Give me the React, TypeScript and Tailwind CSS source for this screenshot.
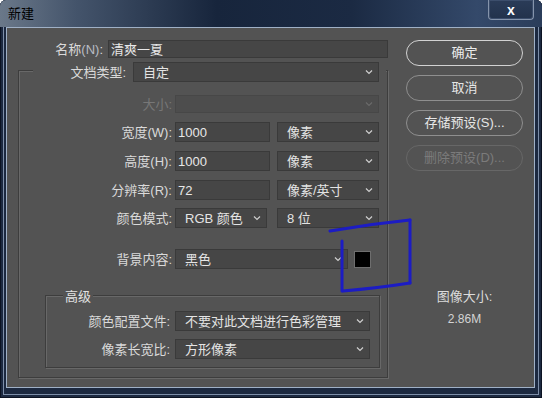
import type { ReactNode } from 'react'

const FONT = "font-['Liberation_Sans','Noto_Sans_CJK_SC',sans-serif]"

function Chevron({ dim = false }: { dim?: boolean }) {
  return (
    <svg width="8" height="6" viewBox="0 0 8 6" className="shrink-0">
      <polyline points="1,1.5 4,4.5 7,1.5" fill="none" stroke={dim ? '#6a6a6a' : '#cfcfcf'} strokeWidth={1.2} />
    </svg>
  )
}

function Select({ w, value, dim = false, h = 'h-[20px]' }: { w: string; value?: string; dim?: boolean; h?: string }) {
  return (
    <div
      className={`${w} ${h} flex items-center justify-between pl-[9px] pr-[5px] border ${dim ? 'bg-[#4d4d4d] border-[#474747]' : 'bg-[#464646] border-[#3a3a3a]'} text-[13px] text-[#e4e4e4]`}
    >
      <span className="leading-none">{value}</span>
      <Chevron dim={dim} />
    </div>
  )
}

function Input({ w, value }: { w: string; value: string }) {
  return (
    <div className={`${w} h-full flex items-center pl-[2px] bg-[#464646] border border-[#3a3a3a] text-[13px] text-[#e8e8e8]`}>
      <span className="leading-none">{value}</span>
    </div>
  )
}

function Row({ label, children, mt, dim = false, h = 'h-[20px]' }: { label: string; children: ReactNode; mt: string; dim?: boolean; h?: string }) {
  return (
    <div className={`flex items-center ${h} ${mt}`}>
      <div className={`w-[153px] text-right text-[13px] leading-none ${dim ? 'text-[#777]' : 'text-[#dadada]'}`}>{label}</div>
      <div className="ml-[3px] flex items-center h-full">{children}</div>
    </div>
  )
}

function Button({ children, tone }: { children: ReactNode; tone: 'main' | 'normal' | 'off' }) {
  const cls =
    tone === 'main'
      ? 'border-[#d2d2d2] text-[#ececec]'
      : tone === 'normal'
      ? 'border-[#8f8f8f] text-[#e6e6e6]'
      : 'border-[#676767] text-[#7b7b7b]'
  return (
    <div className={`h-[26px] rounded-full border flex items-center justify-center text-[13px] ${cls}`}>
      {children}
    </div>
  )
}

export default function App() {
  return (
    <div
      className={`${FONT} relative w-[542px] h-[398px] bg-[#1c2940] rounded-t-[6px] overflow-hidden flex flex-col shadow-[inset_0_0_0_1px_#0c1322,inset_0_0_0_3px_#1c2940,inset_0_0_0_4px_#7d8ea8]`}
    >
      {/* title bar */}
      <div className="h-[27px] shrink-0 flex items-start justify-between bg-[linear-gradient(90deg,#6a7889_0%,#44546b_14%,#17253c_40%,#1b2a43_65%,#34496a_88%,#2b3d5a_100%)]">
        <div className="pl-[8px] pt-[7px] text-[13px] leading-none text-black">新建</div>
        <div className="mr-[8px] w-[46px] h-[20px] rounded-b-[4px] border border-t-0 border-[#8594ab] bg-[linear-gradient(180deg,#2b3c58,#22324c)] shadow-[inset_0_0_0_1px_#3c4e6c] flex items-center justify-center text-white font-bold text-[14px] leading-none">
          x
        </div>
      </div>

      {/* body */}
      <div className="ml-[6px] w-[529px] h-[361px] border border-[#9fb0c6] bg-[#535353] flex pt-[12px] pl-[11px]">
        {/* left column */}
        <div className="w-[370px] flex flex-col">
          <div className="flex items-center h-[18px]">
            <div className="w-[87px] text-right text-[13px] leading-none text-[#dadada]">
              名称<span className="text-[#b8bcc4]">(N)</span>:
            </div>
            <div className="ml-[5px] h-full">
              <Input w="w-[280px]" value="清爽一夏" />
            </div>
          </div>

          <div className="mt-[12px] w-[370px] border border-[#3d3d3d] shadow-[inset_1px_1px_0_#686868,1px_1px_0_#686868] flex flex-col pb-[9px]">
            <div className="-mt-[9px] ml-[14px] w-[353px] h-[20px] bg-[#535353] flex items-center">
              <div className="w-[93px] text-right text-[13px] leading-none text-[#dadada]">文档类型:</div>
              <div className="ml-[7px]">
                <Select w="w-[246px]" value="自定" />
              </div>
            </div>

            <Row label="大小:" mt="mt-[13px]" dim h="h-[18px]">
              <Select w="w-[204px]" dim h="h-[18px]" />
            </Row>
            <Row label="宽度(W):" mt="mt-[9px]">
              <Input w="w-[95px]" value="1000" />
              <div className="ml-[7px]"><Select w="w-[102px]" value="像素" /></div>
            </Row>
            <Row label="高度(H):" mt="mt-[9px]">
              <Input w="w-[95px]" value="1000" />
              <div className="ml-[7px]"><Select w="w-[102px]" value="像素" /></div>
            </Row>
            <Row label="分辨率(R):" mt="mt-[9px]">
              <Input w="w-[95px]" value="72" />
              <div className="ml-[7px]"><Select w="w-[102px]" value="像素/英寸" /></div>
            </Row>
            <Row label="颜色模式:" mt="mt-[8px]">
              <Select w="w-[92px]" value="RGB 颜色" />
              <div className="ml-[10px]"><Select w="w-[102px]" value="8 位" /></div>
            </Row>
            <Row label="背景内容:" mt="mt-[21px]">
              <Select w="w-[173px]" value="黑色" />
              <div className="ml-[6px] w-[17px] h-[17px] bg-black border border-[#6e6e6e]" />
            </Row>

            {/* advanced group */}
            <div className="mt-[26px] ml-[26px] w-[335px] border border-[#3d3d3d] shadow-[inset_1px_1px_0_#686868,1px_1px_0_#686868] flex flex-col pb-[8px]">
              <div className="-mt-[9px] ml-[17px] h-[18px] px-[2px] self-start bg-[#535353] flex items-center text-[13px] leading-none text-[#e2e2e2]">
                高级
              </div>
              <div className="flex items-center h-[20px] mt-[6px]">
                <div className="w-[124px] text-right text-[13px] leading-none text-[#dadada]">颜色配置文件:</div>
                <div className="ml-[5px]"><Select w="w-[195px]" value="不要对此文档进行色彩管理" /></div>
              </div>
              <div className="flex items-center h-[20px] mt-[8px]">
                <div className="w-[124px] text-right text-[13px] leading-none text-[#dadada]">像素长宽比:</div>
                <div className="ml-[5px]"><Select w="w-[195px]" value="方形像素" /></div>
              </div>
            </div>
          </div>
        </div>

        {/* right column */}
        <div className="ml-[18px] w-[117px] flex flex-col">
          <div className="flex flex-col gap-[9px]">
            <Button tone="main">确定</Button>
            <Button tone="normal">取消</Button>
            <Button tone="normal">存储预设(S)...</Button>
            <Button tone="off">删除预设(D)...</Button>
          </div>
          <div className="mt-[118px] text-center text-[13px] leading-[16px] text-[#dcdcdc]">图像大小:</div>
          <div className="mt-[6px] text-center text-[12px] leading-[16px] text-[#d4d4d4]">2.86M</div>
        </div>
      </div>

      {/* hand-drawn blue annotation */}
      <svg className="absolute inset-0 pointer-events-none" width="542" height="398" viewBox="0 0 542 398">
        <g fill="none" stroke="#1c1cc4" strokeWidth={3} strokeLinecap="round">
          <path d="M330 231 Q370 224 410 220" />
          <path d="M410 220 L410 283" />
          <path d="M343 291 Q378 288 410 283" />
          <path d="M342 241 L342 291" />
        </g>
      </svg>
    </div>
  )
}
